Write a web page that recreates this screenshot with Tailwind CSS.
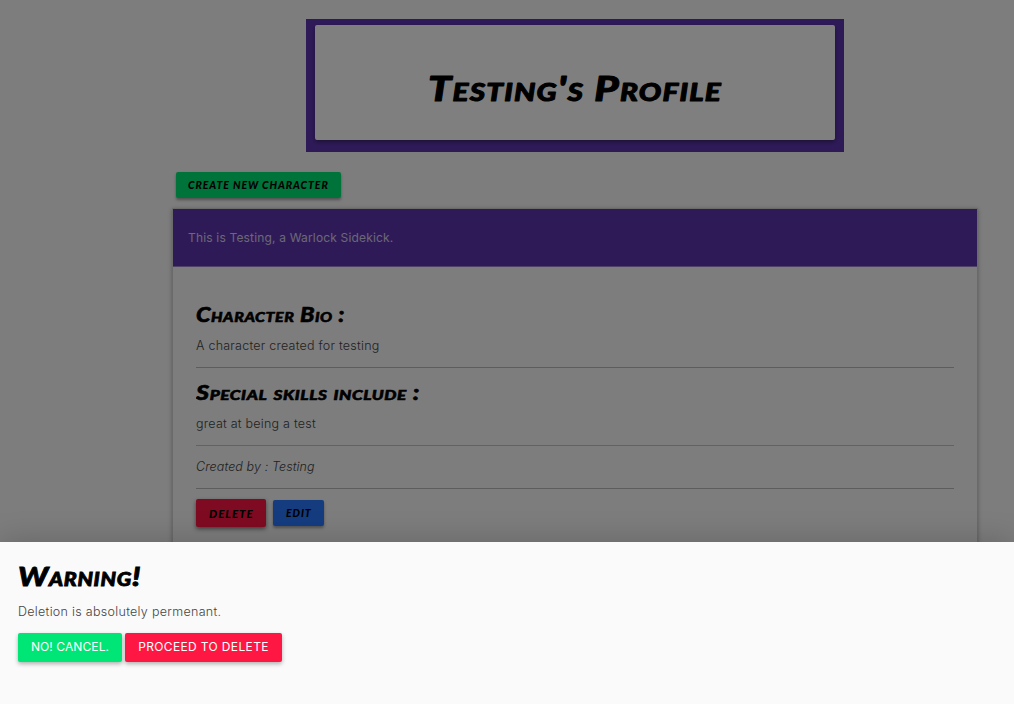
<!DOCTYPE html>
<html lang="en">
<head>
<meta charset="utf-8">
<title>Testing's Profile</title>
<script src="https://cdn.jsdelivr.net/npm/@tailwindcss/browser@4"></script>
</head>
<body class="relative h-[704px] w-[1014px] overflow-hidden bg-[#fafafa] font-['Inter',sans-serif] text-[12.5px] tracking-[0.24px] text-black">
<main class="flex flex-col pt-[19px] pl-[172px]">
  <header class="ml-[134px] h-[133px] w-[538px] bg-[#5e35b1] px-[9px] pt-[6px]">
    <div class="h-[115px] rounded-[2px] bg-white pt-[40px] shadow-[0_2px_4px_rgba(0,0,0,0.4)]">
      <h1><svg class="ml-[113px] block" width="300" height="44"><text x="0" y="36" textLength="294" lengthAdjust="spacingAndGlyphs" class="font-['Lato',sans-serif] text-[35px] font-black italic tracking-[1px] [font-variant:small-caps]" stroke="#000" stroke-width="1" stroke-linejoin="round">Testing's Profile</text></svg></h1>
    </div>
  </header>
  <button class="mt-[20px] ml-[4px] h-[26px] w-[165px] rounded-[2px] bg-[#00e676] shadow-[0_2px_3px_rgba(0,0,0,0.35)]">
    <svg class="block" width="165" height="26"><text x="12" y="17" textLength="140" lengthAdjust="spacing" class="font-['Lato',sans-serif] text-[10.5px] font-black italic">CREATE NEW CHARACTER</text></svg>
  </button>
  <section class="mt-[10px] h-[421px] w-[806px] border border-[#d4d4d4] bg-[#fafafa] shadow-[0_1px_4px_rgba(0,0,0,0.3)]">
    <div class="flex h-[58px] items-center border-b border-[#9b83ca] bg-[#5e35b1] pl-[15px] text-[12px] tracking-[0.17px] text-[#d8cfea]">This is Testing, a Warlock Sidekick.</div>
    <div class="flex flex-col pt-[34px] pr-[23px] pl-[23px]">
      <h2><svg class="block h-[30px] w-full"><text x="0" y="21" textLength="149" lengthAdjust="spacingAndGlyphs" class="font-['Lato',sans-serif] text-[20.5px] font-black italic tracking-[0.5px] [font-variant:small-caps]" stroke="#000" stroke-width="0.6">Character Bio :</text></svg></h2>
      <p class="mt-[5px] h-[20px] font-light leading-[20px] text-[#444]">A character created for testing</p>
      <hr class="mt-[11px] border-[#bbb]">
      <h2 class="mt-[10px]"><svg class="block h-[30px] w-full"><text x="0" y="22" textLength="224" lengthAdjust="spacingAndGlyphs" class="font-['Lato',sans-serif] text-[20.5px] font-black italic tracking-[0.5px] [font-variant:small-caps]" stroke="#000" stroke-width="0.6">Special skills include :</text></svg></h2>
      <p class="mt-[6px] h-[20px] font-light leading-[20px] text-[#444]">great at being a test</p>
      <hr class="mt-[11px] border-[#c4c4c4]">
      <p class="mt-[11px] h-[20px] font-light italic leading-[20px] tracking-[0.1px] text-[#444]">Created by : Testing</p>
      <hr class="mt-[11px] border-[#bbb]">
      <div class="mt-[10px] flex items-center gap-[7px]">
        <button class="h-[28px] w-[70px] rounded-[2px] bg-[#ff1744] shadow-[0_2px_4px_rgba(0,0,0,0.5)]"><svg class="block" width="70" height="28"><text x="13" y="19" textLength="44" lengthAdjust="spacing" class="font-['Lato',sans-serif] text-[11.5px] font-black italic">DELETE</text></svg></button>
        <button class="h-[26px] w-[51px] rounded-[2px] bg-[#2979ff] shadow-[0_2px_3px_rgba(0,0,0,0.35)]"><svg class="block" width="51" height="26"><text x="13" y="17" textLength="25" lengthAdjust="spacing" class="font-['Lato',sans-serif] text-[10.5px] font-black italic">EDIT</text></svg></button>
      </div>
    </div>
  </section>
</main>
<div class="absolute inset-0 bg-black/50"></div>
<aside class="absolute inset-x-0 bottom-0 flex h-[162px] flex-col bg-[#fafafa] pt-[18px] pl-[18px] shadow-[0_0_30px_rgba(0,0,0,0.2)]">
  <h2><svg class="block" width="140" height="34"><text x="0" y="26" textLength="123" lengthAdjust="spacingAndGlyphs" class="font-['Lato',sans-serif] text-[26px] font-black italic tracking-[0.6px] [font-variant:small-caps]" stroke="#000" stroke-width="0.8">Warning!</text></svg></h2>
  <p class="mt-[8px] h-[20px] font-light leading-[20px] tracking-[0.3px] text-[#444]">Deletion is absolutely permenant.</p>
  <div class="mt-[11px] flex gap-[3px] whitespace-nowrap text-white">
    <button class="h-[29px] w-[104px] rounded-[2px] bg-[#00e676] pb-px text-[12px] tracking-[0.1px] shadow-[0_2px_4px_rgba(0,0,0,0.3)]">NO! CANCEL.</button>
    <button class="h-[29px] w-[157px] rounded-[2px] bg-[#ff1744] pb-px text-[12px] tracking-[0.36px] shadow-[0_2px_4px_rgba(0,0,0,0.3)]">PROCEED TO DELETE</button>
  </div>
</aside>
</body>
</html>
